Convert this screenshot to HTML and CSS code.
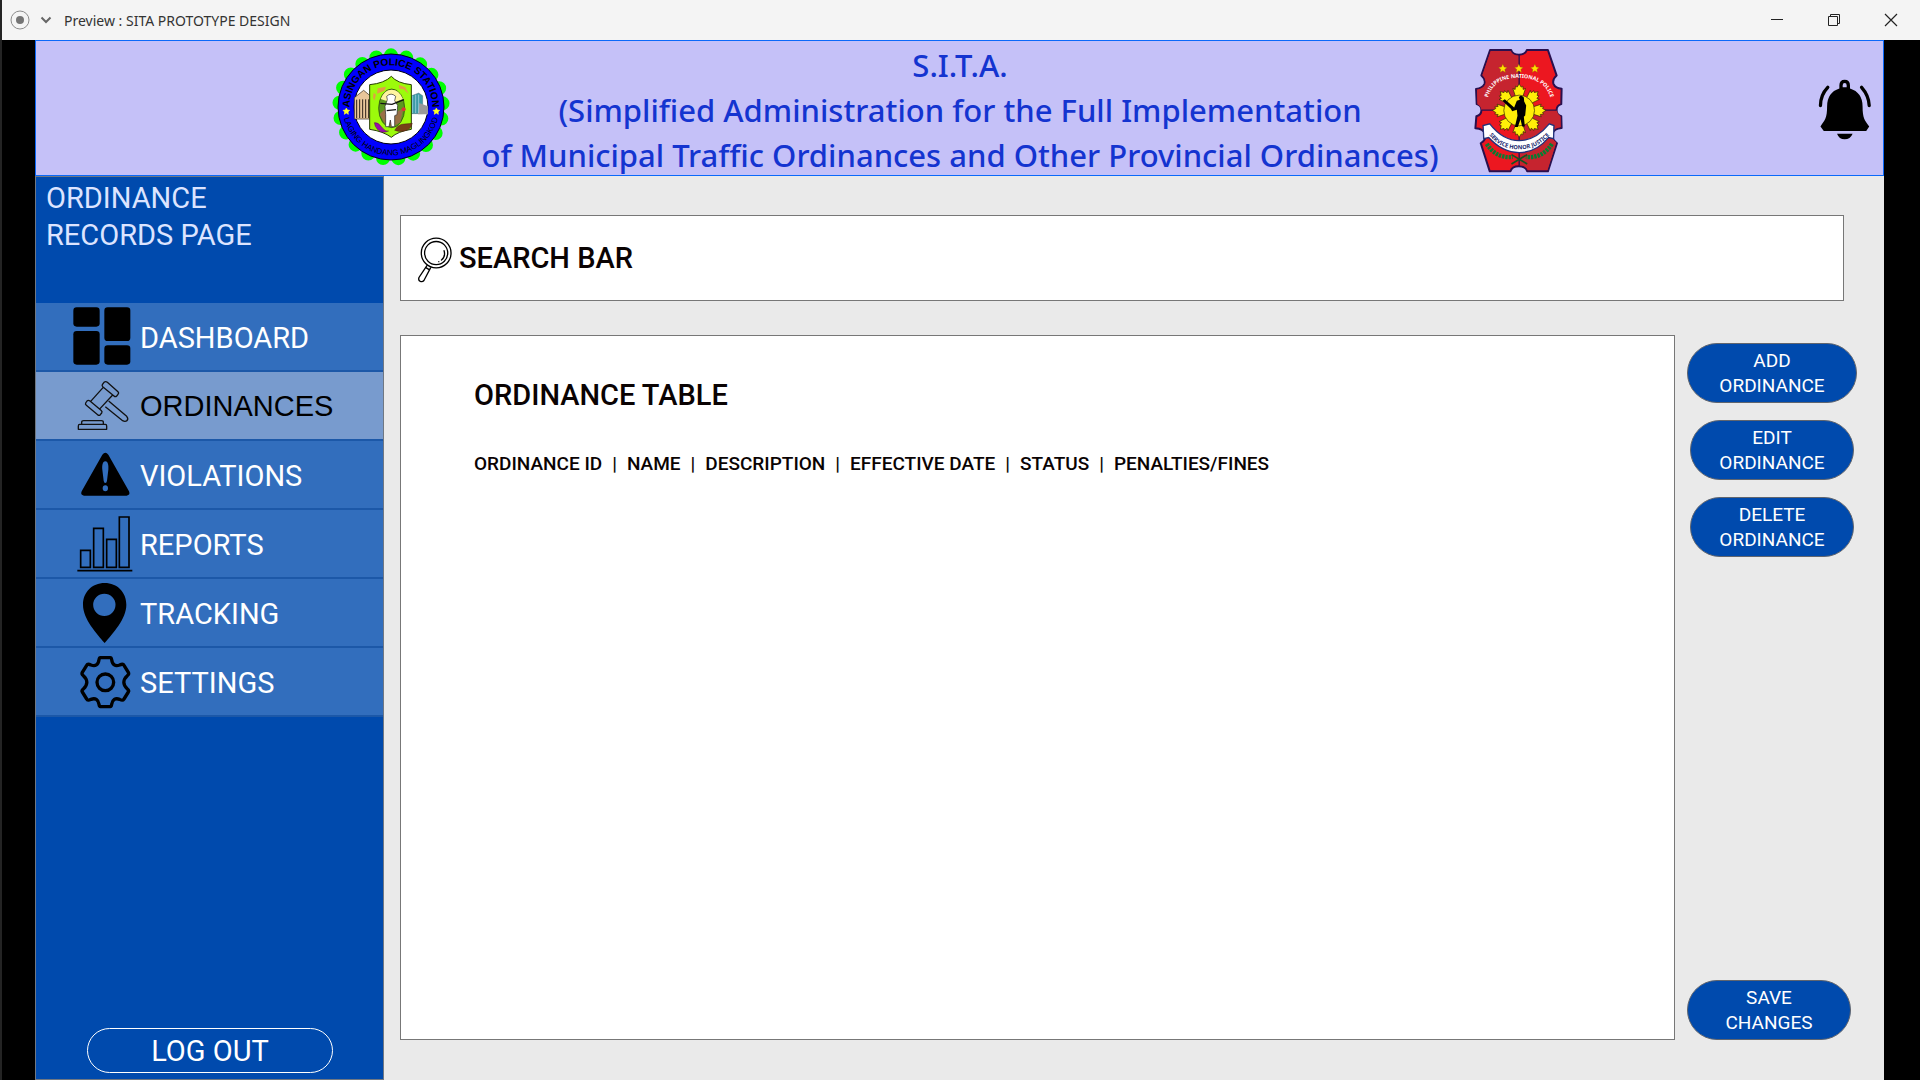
FILE: index.html
```html
<!DOCTYPE html>
<html lang="en">
<head>
<meta charset="utf-8">
<meta name="viewport" content="width=device-width, initial-scale=1">
<title>Preview : SITA PROTOTYPE DESIGN</title>
<link rel="stylesheet" href="styles.css">
</head>
<body>
<div class="titlebar">
  <svg class="app-icon" viewBox="0 0 20 20" aria-hidden="true"><circle cx="10" cy="10" r="9" fill="none" stroke="#8c8c8c"/><circle cx="10" cy="10" r="4" fill="#747474"/></svg>
  <svg class="chevron" viewBox="0 0 12 12" aria-hidden="true"><path d="M1.500 3.500 6 8l4.500-4.500" fill="none" stroke="#666" stroke-width="2"/></svg>
  <span class="window-title">Preview : SITA PROTOTYPE DESIGN</span>
  <div class="window-controls">
    <button type="button" aria-label="Minimize"><svg viewBox="0 0 14 14"><path d="M1 6.500h12" stroke="#222" fill="none"/></svg></button>
    <button type="button" aria-label="Restore"><svg viewBox="0 0 14 14"><path d="M1.500 3.500h9v9h-9zM3.500 3.500v-2h9v9h-2" stroke="#222" fill="none"/></svg></button>
    <button type="button" aria-label="Close"><svg viewBox="0 0 14 14"><path d="M1 1l12 12M13 1 1 13" stroke="#222" fill="none" stroke-width="1.200"/></svg></button>
  </div>
</div>
<div class="stage">
  <header class="banner">
    <svg class="station-seal" viewBox="35 20 360 360" role="img" aria-label="Asingan Police Station">
      <defs>
        <path id="ring-top" d="M93 221a124 124 0 1 1 244 0"/>
        <path id="ring-bottom" d="M70 200a145 145 0 0 0 290 0"/>
      </defs>
      <circle cx="215" cy="200" r="155" fill="none" stroke="#0f0" stroke-width="42" stroke-dasharray="0 46.380" stroke-linecap="round" transform="rotate(-90 215 200)"/>
      <circle cx="215" cy="200" r="159" fill="#00f" stroke="#001"  stroke-width="3"/>
      <circle cx="215" cy="200" r="111" fill="#fff" stroke="#001" stroke-width="3"/>
      <g fill="#e9c69a" stroke="#2d2119" stroke-width="2"><path d="M105 172l28-22 24 20v66h-52z"/><path d="M112 178v55m9-56v56m9-56v56m9-56v56m9-56v56" stroke-width="3"/></g>
      <path d="M272 168l26-10 12 8v54h-38z" fill="#3c9aa6" stroke="#345"/><path d="M300 188l26 10v24h-30z" fill="#999"/><path d="M280 166v52m9-55v55m9-55v55" stroke="#bde" stroke-width="2"/>
      <path d="M216 108q18 21 60 25v134q-40 6-60 24-24-18-65-24V133q44-4 65-25z" fill="#9cfb0b" stroke="#263b05" stroke-width="3"/>
      <path d="M175 144l25-5-5 12-22 9zM238 133l20 8 10 20-15-14-13-2zM163 157l7 6-5 18-4-10z" fill="#e1a142"/>
      <ellipse cx="217" cy="204" rx="39" ry="58" fill="#5c981e" stroke="#213610" stroke-width="2"/>
      <path d="M184 176q11-28 33-28t34 28l-31 12z" fill="#fff4a0"/><path d="M181 222l20-20 28 14 23-12-9 42-25 14-22-11z" fill="#9a7046"/>
      <path d="M197 198l7-20-2-10q13-13 27 0l-3 13 9 14-2 28-7 3v33h-10l-3-20-4 20h-10v-36z" fill="#fff" stroke="#222" stroke-width="2"/>
      <path d="M183 189l35 3 36-14M202 211l28-3" fill="none" stroke="#111" stroke-width="4"/><circle cx="253" cy="207" r="6" fill="#d33"/>
      <path d="M165 247q11-2 22 13t21 12q-20 10-34-5-8-8-9-20z" fill="#91a" stroke="#302"/><path d="M226 270q9-18 28-19 18-1 25-2-4 18-20 22-19 6-33-1z" fill="#764018" stroke="#301"/>
      <path d="M81 203l3 6 7 1-5 5 1 7-6-4-6 4 1-7-5-5 7-1zM351 203l3 6 7 1-5 5 1 7-6-4-6 4 1-7-5-5 7-1z" fill="#ff2" stroke="#ff2" stroke-width="2"/>
      <text class="seal-name" text-anchor="middle"><textPath href="#ring-top" startOffset="50%">ASINGAN POLICE STATION</textPath></text>
      <text class="seal-motto" text-anchor="middle"><textPath href="#ring-bottom" startOffset="50%">LAGING HANDANG MAGLINGKOD</textPath></text>
    </svg>
    <h1 class="banner-title">S.I.T.A.<br>(Simplified Administration for the Full Implementation<br>of Municipal Traffic Ordinances and Other Provincial Ordinances)</h1>
    <svg class="police-badge" viewBox="65 20 275 380" role="img" aria-label="Philippine National Police">
      <defs>
        <path id="badge-arc" d="M107 192Q113 112 202 112T301 192"/>
        <path id="badge-scroll" d="M112 282Q145 326 202 326T295 282"/>
      </defs>
      <path d="M116 29h63q4 14 23 14t24-14h63l26 76q-14 12-9 26 5 12 24 14l-1 46q-14 4-14 18t14 18l1 35q-24 2-27 17-4 17 13 29l-27 84h-62q-4-15-25-15t-25 15h-62l-27-84q17-10 13-27-4-17-29-18l3-36q15-4 15-18T76 191l-2-45q20-3 25-15 5-14-9-26z" fill="#ec1720" stroke="#29104f" stroke-width="6" stroke-linejoin="round"/>
      <path d="M118 32h60q5 14 24 14v162H90q-2-12-12-17l-1-43q20-4 25-17 4-14-9-27zM203 209h112q3 12 12 18v32q-22 3-25 18-3 16 12 29l-26 82h-58q-4-15-27-15z" fill="#c6242f"/>
      <path d="M203 43v332M92 209h223" stroke="#29104f" stroke-width="4"/>
      <g fill="#ffef08" stroke="#322600" stroke-width="2">
        <path id="ray" d="M193 171l-9-27 7 3 1-10 5 3 6-10 6 10 5-3 1 10 7-3-9 27z"/>
        <use href="#ray" transform="rotate(45 203 210)"/><use href="#ray" transform="rotate(90 203 210)"/><use href="#ray" transform="rotate(135 203 210)"/><use href="#ray" transform="rotate(180 203 210)"/><use href="#ray" transform="rotate(225 203 210)"/><use href="#ray" transform="rotate(270 203 210)"/><use href="#ray" transform="rotate(315 203 210)"/>
        <circle cx="203" cy="210" r="46"/>
      </g>
      <path d="M202 170q7-8 15 1l1 12 6 12-3 30-4 4 3 29h-8l-5-22-8 23h-9l8-33-2-18-14 4-4-7-25-24 7-5 28 25 8-20 9-3z" fill="#000"/>
      <g fill="#ffdf00" stroke="#8d5300"><path id="star" d="M154 71l4 9 9 1-7 6 2 9-8-5-8 5 2-9-7-6 9-1z"/><use href="#star" x="48"/><use href="#star" x="96"/></g>
      <path d="M106 310q28 44 78 39m117-39q-28 44-78 39" fill="none" stroke="#087c32" stroke-width="13" stroke-dasharray="7 3"/><path d="M180 370l47-28m-47 0 47 28" stroke="#145420" stroke-width="5"/>
      <path d="M97 294l-2-39 20-5q39 50 88 50t90-50l14 5-1 39-15-3q-38 45-88 45t-91-45z" fill="#fff" stroke="#23317b" stroke-width="4"/>
      <text class="badge-name" text-anchor="middle"><textPath href="#badge-arc" startOffset="50%">PHILIPPINE NATIONAL POLICE</textPath></text>
      <text class="badge-motto" text-anchor="middle"><textPath href="#badge-scroll" startOffset="50%">SERVICE HONOR JUSTICE</textPath></text>
    </svg>
    <button class="bell" type="button" aria-label="Notifications">
      <svg viewBox="170 233 168 190"><path fill-rule="evenodd" d="M237 262v-10q0-17 16-17t16 17v10q38 12 38 54c0 35 6 41 20 60l-9 14H190l-10-14c14-20 20-26 20-60q0-42 37-54zM247 258h12v-6q0-7-6-7t-6 7zM230 398h47q-7 17-24 17t-23-17z"/><path d="M202 258q-22 23-22 55m124-55q22 25 23 55" fill="none" stroke="#000" stroke-width="10" stroke-linecap="round"/></svg>
    </button>
  </header>
  <div class="workspace">
    <aside class="sidebar">
      <h2 class="page-name">ORDINANCE<br>RECORDS PAGE</h2>
      <nav class="menu">
        <a href="#dashboard"><svg viewBox="120 39 189 207"><g><rect x="130" y="52" width="79" height="58" rx="10"/><rect x="223" y="52" width="78" height="101" rx="10"/><rect x="130" y="123" width="79" height="101" rx="10"/><rect x="223" y="166" width="78" height="58" rx="10"/></g></svg>DASHBOARD</a>
        <a class="active" href="#ordinances" aria-current="page"><svg viewBox="120 246 189 207"><g fill="none" stroke="#111" stroke-width="4" stroke-linejoin="round"><path d="M217 284l5-7q5-4 10 0l32 28q4 4 0 8l-4 5q-4 4-8 0l-33-27q-4-4-2-7zM167 339l4-6q4-4 9 0l33 28q5 4 2 8l-4 5q-4 4-8 0l-34-28q-4-3-2-7zM219 293l-37 41m66-19-38 41M236 333l54 46q6 7 1 13-6 4-13 0l-52-42"/><path d="M155 402v-5q0-5 6-5h53q6 0 6 5v5M149 403h77q4 0 4 5v10h-85v-10q0-5 4-5z"/></g></svg>ORDINANCES</a>
        <a href="#violations"><svg viewBox="120 453 189 207"><path fill-rule="evenodd" d="M217 494q9-12 18 0l62 110q5 11-7 13H162q-12-2-7-13zM226 514c-9 0-10 15-9 25l4 33q1 7 5 7t5-7l4-33c1-10 0-25-9-25zM226 586a8 9 0 1 0 0 18 8 9 0 0 0 0-18z"/></svg>VIOLATIONS</a>
        <a href="#reports"><svg viewBox="120 30 189 207"><path d="M152 151h29v51h-29zM191 85h29v117h-29zM230 118h29v84h-29zM268 51h29v151h-29zM142 212h165" fill="none" stroke="#000" stroke-width="5"/></svg>REPORTS</a>
        <a href="#tracking"><svg viewBox="120 237 189 207"><path fill-rule="evenodd" d="M224 249c38 0 65 28 65 65 0 43-41 86-65 115-24-29-65-72-65-115 0-37 27-65 65-65zM223 281a33 33 0 1 0 0 67 33 33 0 0 0 0-67z"/></svg>TRACKING</a>
        <a href="#settings"><svg viewBox="120 444 189 207"><g fill="none" stroke="#000" stroke-width="10" stroke-linejoin="round"><circle cx="226" cy="547" r="25"/><path d="M211 473h30q3 0 4 6c2 16 11 21 24 16q10-5 13 1l13 21q3 6-3 10c-14 12-14 28 0 40q6 5 3 9l-13 21q-4 6-13 1c-13-5-22 1-24 15q-1 7-4 7h-30q-3 0-4-7c-2-14-11-20-24-15q-10 5-13-1l-13-21q-3-4 3-9c14-12 14-28 0-40q-6-4-3-10l13-21q3-6 13-1c13 5 22 0 24-16q1-6 4-6z"/></g></svg>SETTINGS</a>
      </nav>
      <button class="logout" type="button">LOG OUT</button>
    </aside>
    <main class="content">
      <label class="search">
        <svg viewBox="80 100 115 150" aria-hidden="true"><g fill="none" stroke="#000" stroke-width="4" stroke-linecap="round"><circle cx="138" cy="160" r="45"/><circle cx="138" cy="160" r="35"/><path d="M162 153q5 18-8 28M146 186h0M110 198l-24 36q-3 9 4 12 7 2 11-3l20-38M107 204l11 7"/></g></svg>
        <input type="search" placeholder="SEARCH BAR" aria-label="Search ordinances">
      </label>
      <section class="records">
        <h2 id="table-title">ORDINANCE TABLE</h2>
        <table aria-labelledby="table-title">
          <thead><tr><th>ORDINANCE ID</th><th>NAME</th><th>DESCRIPTION</th><th>EFFECTIVE DATE</th><th>STATUS</th><th>PENALTIES/FINES</th></tr></thead>
        </table>
      </section>
      <div class="actions">
        <button class="pill wide" type="button">ADD<br>ORDINANCE</button>
        <button class="pill" type="button">EDIT<br>ORDINANCE</button>
        <button class="pill" type="button">DELETE<br>ORDINANCE</button>
        <button class="pill save" type="button">SAVE<br>CHANGES</button>
      </div>
    </main>
  </div>
</div>
</body>
</html>
```
FILE: styles.css
```css
* { box-sizing: border-box; }

body {
  margin: 0;
  min-height: 100vh;
  display: flex;
  flex-direction: column;
  border-left: 2px solid #242424;
  background: #000;
  font-family: Roboto, "Liberation Sans", sans-serif;
}

button {
  margin: 0;
  padding: 0;
  border: 0;
  background: none;
  font: inherit;
  cursor: pointer;
}

svg { display: block; flex: none; }

/* Window title bar */
.titlebar {
  display: flex;
  align-items: center;
  height: 40px;
  padding-left: 8px;
  background: #f4f4f4;
  color: #333;
  font: 14px "Noto Sans", sans-serif;
}
.app-icon { width: 20px; height: 20px; }
.chevron { width: 12px; height: 12px; margin: 0 12px 0 10px; }
.window-controls { display: flex; margin-left: auto; padding-right: 1px; }
.window-controls button { width: 57px; height: 40px; display: grid; place-items: center; }
.window-controls svg { width: 14px; height: 14px; }

.stage {
  flex: 1;
  display: flex;
  flex-direction: column;
  padding: 0 36px 0 33px;
}

/* Banner */
.banner {
  display: grid;
  grid-template-columns: 297fr 120px auto 92px 320fr;
  grid-template-rows: 100%;
  align-items: center;
  height: 136px;
  padding: 6px 0 1px;
  border: 1px solid #0b69fa;
  background: #c5c1f8;
}
.station-seal { grid-column: 2; align-self: start; width: 120px; height: 120px; }
.banner-title {
  margin: 0;
  padding: 0 34px 0 30px;
  color: #1434d0;
  font: 500 31px/45px "Noto Sans", sans-serif;
  text-align: center;
  white-space: nowrap;
}
.police-badge { width: 92px; height: 127px; }
.bell { justify-self: end; margin-right: 10px; }
.bell svg { width: 56px; height: 63px; }
.seal-name { font: bold 30px "Liberation Sans Narrow", "Liberation Sans", sans-serif; }
.seal-motto { font: 24px "Liberation Sans", sans-serif; }
.badge-name { font: bold 16px "Noto Sans", sans-serif; fill: #fff; }
.badge-motto { font: bold 17px "Noto Sans", sans-serif; fill: #17266c; }

.workspace { flex: 1; display: flex; }

/* Sidebar */
.sidebar {
  flex: none;
  width: 349px;
  display: flex;
  flex-direction: column;
  border: 1px solid #707883;
  background: #004aad;
}
.page-name {
  height: 126px;
  margin: 0;
  padding: 3px 10px;
  color: #dce4ff;
  font-size: 29px;
  font-weight: 400;
  line-height: 37px;
}
.menu a {
  display: flex;
  align-items: center;
  gap: 7px;
  height: 69px;
  padding-left: 34px;
  background: #326ebd;
  box-shadow: inset 0 -2px #1c58a8;
  color: #fff;
  font-size: 29px;
  text-decoration: none;
}
.menu svg { width: 63px; height: 69px; }
.menu .active {
  background: #789bce;
  color: #000;
  font-family: "Liberation Sans", sans-serif;
}
.logout {
  width: 246px;
  height: 45px;
  margin: auto 0 6px 51px;
  border: 1px solid #fff;
  border-radius: 23px;
  color: #fff;
  font-size: 29px;
}

/* Content */
.content {
  flex: 1;
  display: grid;
  grid-template-columns: 1fr 170px;
  grid-template-rows: 86px 1fr;
  gap: 34px 12px;
  padding: 39px 27px 40px 16px;
  background: #eaeaea;
}
.search {
  grid-column: 1 / -1;
  display: flex;
  align-items: center;
  gap: 4px;
  margin-right: 13px;
  padding: 0 16px;
  border: 1px solid #777;
  background: #fff;
}
.search svg { width: 38px; height: 50px; }
.search input {
  flex: 1;
  min-width: 0;
  padding: 0;
  border: 0;
  outline: 0;
  background: none;
  font: 500 29px Roboto, sans-serif;
}
.search input::placeholder { color: #0a0303; opacity: 1; }

.records {
  padding: 41px 73px;
  border: 1px solid #777;
  background: #fff;
  color: #0a0303;
}
.records h2 { margin: 0 0 32px; font-size: 29px; font-weight: 500; line-height: 37px; }
.records table { border-collapse: collapse; }
.records th {
  padding: 0;
  font-size: 19px;
  font-weight: 500;
  line-height: 36px;
  white-space: nowrap;
}
.records th + th::before { content: "|"; margin: 0 10px; }

.actions { display: flex; flex-direction: column; align-items: center; gap: 17px; padding-top: 8px; }
.pill {
  width: 164px;
  height: 60px;
  border: 1px solid #60656e;
  border-radius: 30px;
  background: #004aad;
  color: #fff;
  font-size: 19px;
  line-height: 25px;
}
.pill.wide { width: 170px; }
.pill.save { align-self: flex-start; margin-top: auto; }
```
